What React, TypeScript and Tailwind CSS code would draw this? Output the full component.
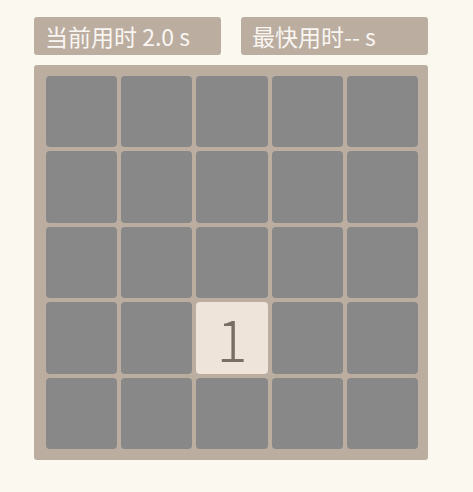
import React from "react";

export default function App() {
  const cells = Array.from({ length: 25 }, (_, i) => (i === 17 ? 1 : 0));
  return (
    <div
      className="w-[473px] h-[492px] bg-[#faf8ef] pt-[17px] pl-[34px]"
      style={{ fontFamily: '"Noto Sans CJK SC", "Noto Sans", sans-serif' }}
    >
      <div className="flex gap-[20px] w-[394px]">
        <div className="w-[187px] h-[38px] rounded-[3px] bg-[#bbada0] text-[#f9f6f2] text-[23px] leading-[38px] pl-[11px]">
          当前用时 2.0 s
        </div>
        <div className="w-[187px] h-[38px] rounded-[3px] bg-[#bbada0] text-[#f9f6f2] text-[23px] leading-[38px] pl-[11px]">
          最快用时-- s
        </div>
      </div>
      <div className="mt-[10px] w-[394px] h-[395px] rounded-[3px] bg-[#bbada0] pl-[12px] pr-[10px] py-[11px] grid grid-cols-5 grid-rows-5 gap-[4px]">
        {cells.map((v, i) =>
          v ? (
            <div
              key={i}
              className="rounded-[4px] bg-[#eee4da] text-[#776e65] flex items-center justify-center text-[58px] font-light"
            >
              1
            </div>
          ) : (
            <div key={i} className="rounded-[4px] bg-[#888888]" />
          )
        )}
      </div>
    </div>
  );
}
